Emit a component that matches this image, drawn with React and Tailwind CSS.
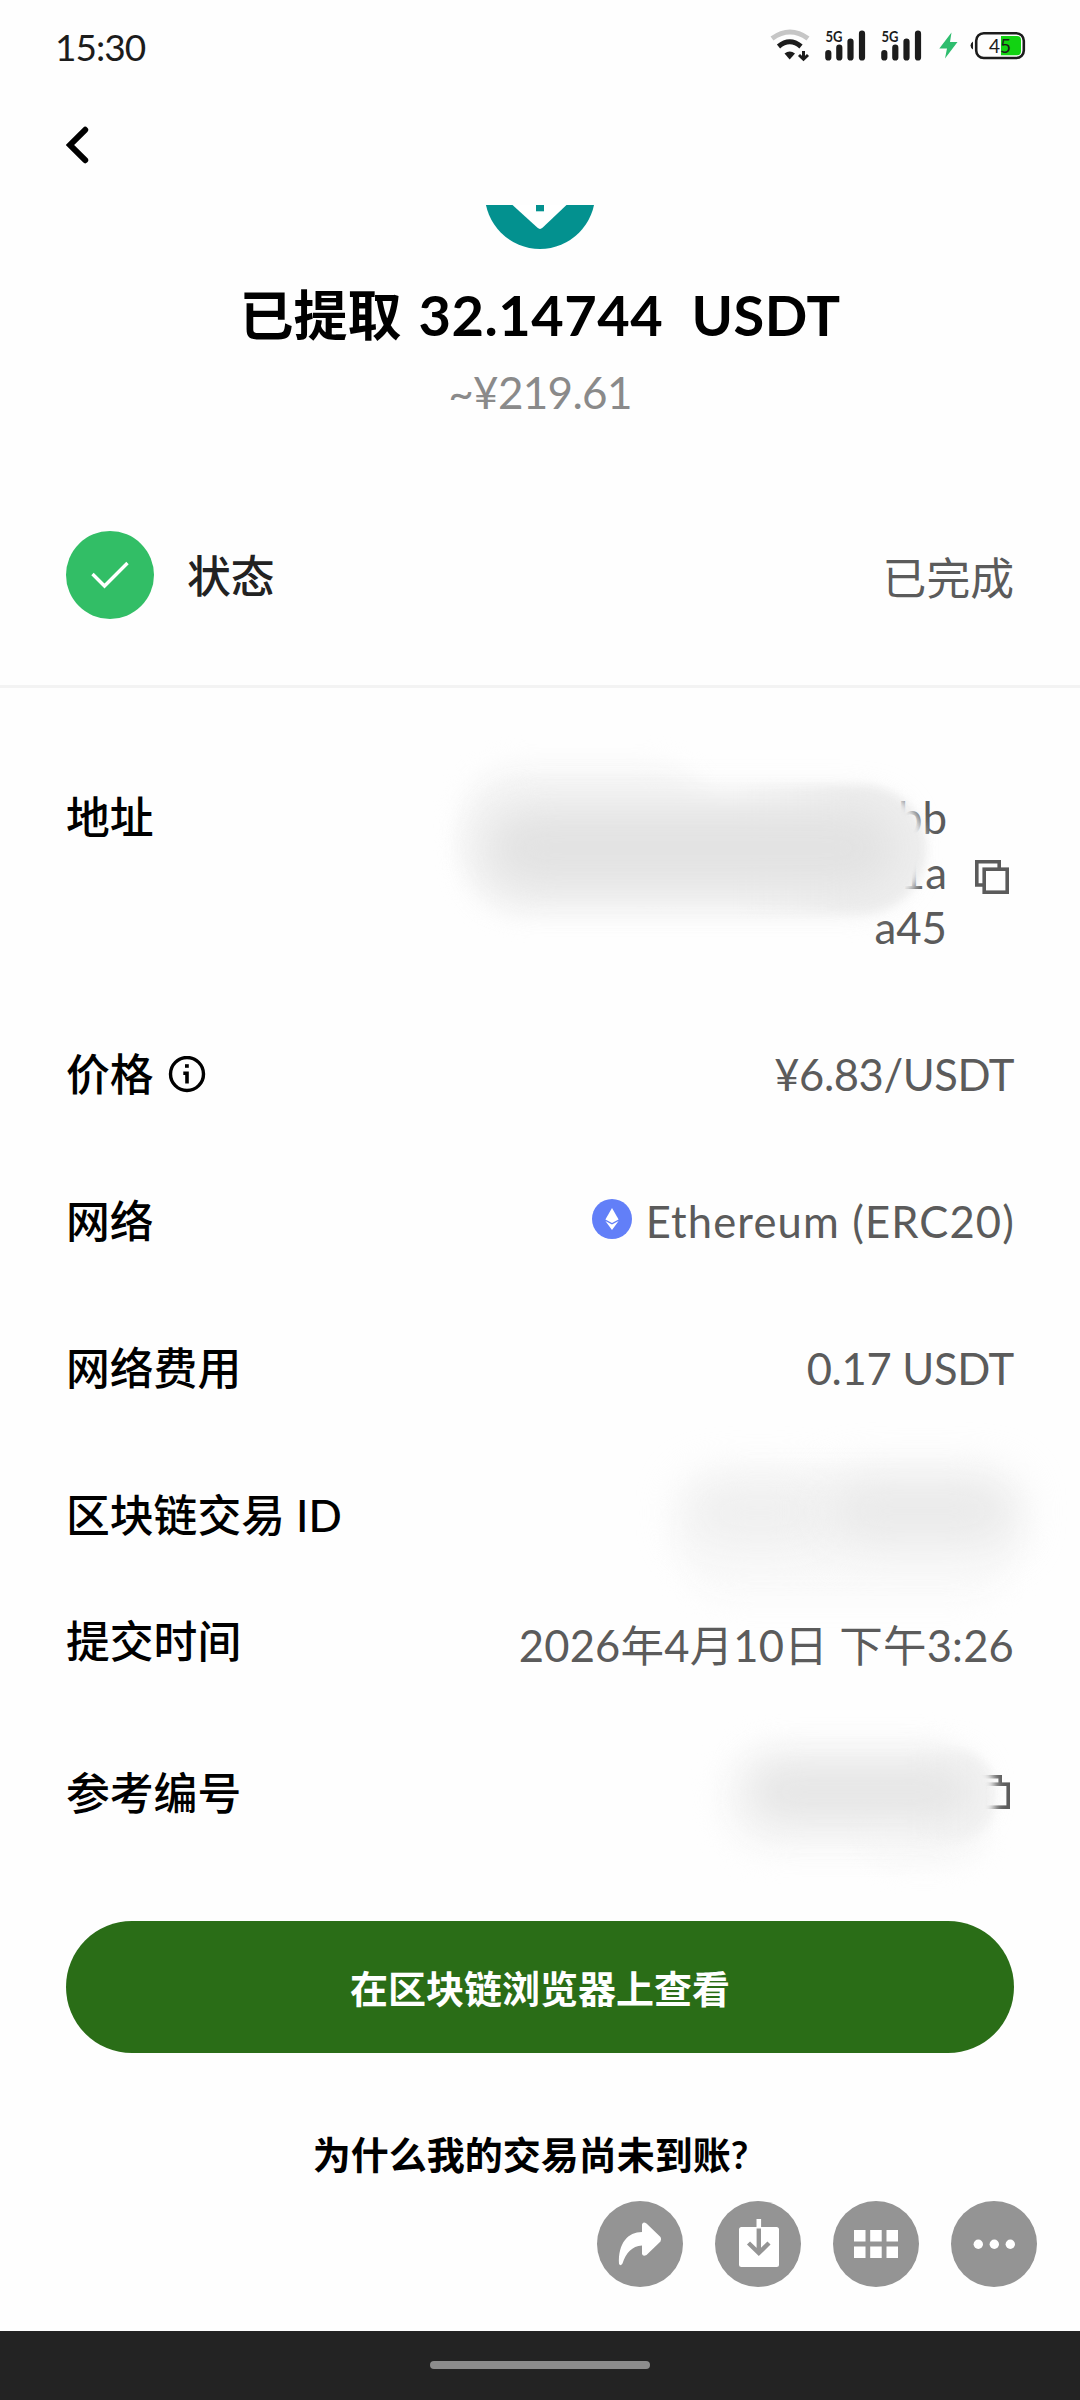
import React from 'react';

const StatusBar = () => (
    <div className="h-[92px] pl-[55px] pr-[54px] flex items-center justify-between text-[#1c1c1c]">
        <span className="text-[37px] leading-none tracking-[-1px]">15:30</span>
        <svg width="258" height="40" viewBox="768 26 258 40" fill="none">
            {/* wifi */}
            <path d="M772 38.5 Q790 25.5 808 38.5" stroke="#c6c6c6" strokeWidth="5" />
            <path d="M778.5 46.5 Q789.7 37 801 46.5" stroke="#1c1c1c" strokeWidth="5" />
            <path d="M784.5 53.5 Q789.7 49.5 795 53.5 L789.7 59.5 Z" fill="#1c1c1c" />
            <path d="M803.5 51 V58 M799 55 L803.5 59.3 L808 55" stroke="#1c1c1c" strokeWidth="3" />
            <Signal x={0} />
            <Signal x={56} />
            {/* charging */}
            <path d="M951.5 32.5 L939.3 48.5 H947 L945 58.5 L957.5 42 H950 Z" fill="#2ebd6e" />
            {/* battery */}
            <path d="M973 41.5 A4.5 4.5 0 0 0 973 49.5 Z" fill="#1c1c1c" />
            <path d="M1001 36 H1017 Q1021 36 1021 40 V51 Q1021 55.3 1017 55.3 H1001 Z" fill="#12d312" />
            <rect x="976.2" y="33.2" width="47.6" height="24.8" rx="7.5" stroke="#1c1c1c" strokeWidth="2.6" />
            <text x="989" y="52.6" fontSize="19" textLength="22" fill="#1c1c1c">45</text>
        </svg>
    </div>
);

const Signal = ({ x }) => (
    <g transform={`translate(${x} 0)`}>
        <text x="825.5" y="41.8" fontSize="15.5" fontWeight="700" textLength="17" lengthAdjust="spacingAndGlyphs" fill="#1c1c1c">5G</text>
        <path d="M828.3 53 V57.5 M839.3 47.7 V57.5 M850.5 41.5 V57.5 M862 33.7 V57.5" stroke="#1c1c1c" strokeWidth="6.2" strokeLinecap="round" />
    </g>
);

const CopyIcon = () => (
    <svg width="34" height="34" viewBox="0 0 34 34" fill="none" stroke="#5b5b5b" strokeWidth="3.6">
        <path d="M8 25 H1.8 V1.8 H24.2 V8" />
        <rect x="9.2" y="9.2" width="23" height="23" />
    </svg>
);

const Row = ({ label, children, className = 'h-[147px]' }) => (
    <div className={`flex items-center justify-between px-[66px] pt-[2px] text-[43.5px] leading-[55px] ${className}`}>
        <div className="flex items-center font-medium text-[43.8px] text-black">{label}</div>
        <div className="flex items-center text-[#5b5b5b]">{children}</div>
    </div>
);

const RoundButton = ({ children }) => (
    <button className="size-[86px] rounded-full bg-[#949494]">
        <svg width="86" height="86" viewBox="0 0 86 86" fill="none">{children}</svg>
    </button>
);

const App = () => {
    return (
        <div className="w-[1080px] h-[2400px] bg-[#fefefe] flex flex-col overflow-hidden font-['Lato','Noto_Sans_CJK_SC',sans-serif]">
            <StatusBar />

            <div className="h-[113px] pl-[66px] pt-[34px]">
                <svg width="24" height="38" viewBox="66 126 24 38" fill="none">
                    <path d="M85.2 129.8 L70 145 L85.2 160.2" stroke="#000" strokeWidth="6" strokeLinecap="round" />
                </svg>
            </div>

            {/* Amount */}
            <div className="h-[278px] flex flex-col items-center">
                <svg width="110" height="44" viewBox="485 205 110 44">
                    <circle cx="540" cy="193.7" r="55.2" fill="#03918f" />
                    <path d="M512.5 205 L537.5 227.8 Q540 230 542.5 227.8 L566.5 205 Z" fill="#fff" />
                    <rect x="536" y="205" width="8" height="6.3" fill="#03918f" />
                </svg>
                <h1 className="mt-[36px] h-[60px] whitespace-pre text-[54px] leading-[60px] font-bold text-black">
                    已提取 <span className="ml-[4px] text-[56px] tracking-[0.5px]">32.14744  USDT</span>
                </h1>
                <p className="mt-[16px] text-[44px] leading-[62px] tracking-[-0.7px] text-[#8a8a8a]">~¥219.61</p>
            </div>

            {/* Status */}
            <div className="h-[205px] pb-[19px] flex items-center px-[66px] border-b-[3px] border-[#f3f3f3] text-[43.8px] leading-[55px]">
                <svg width="88" height="88" viewBox="0 0 88 88" fill="none">
                    <circle cx="44" cy="44" r="44" fill="#32be66" />
                    <path d="M26.5 43 L38.5 55 L61.5 32" stroke="#fff" strokeWidth="3.4" />
                </svg>
                <span className="ml-[33px] pt-[3px] font-medium text-[#222]">状态</span>
                <span className="ml-auto pt-[7px] text-[#5b5b5b]">已完成</span>
            </div>

            {/* Address */}
            <div className="h-[312px] px-[66px] pt-[102px] flex text-[43.8px] leading-[55px]">
                <span className="font-medium text-black">地址</span>
                <div className="relative ml-auto text-right text-[#5b5b5b]">
                    <div>bb</div>
                    <div>1a</div>
                    <div>a45</div>
                    <div className="absolute right-[236px] top-[-24px] w-[250px] h-[120px] rounded-full bg-[#f6f6f6] blur-[13px]"></div>
                    <div className="absolute right-[36px] top-[6px] w-[446px] h-[116px] rounded-[58px] bg-[#f3f3f3] blur-[13px]"></div>
                    <div className="absolute right-[21px] top-[-4px] w-[190px] h-[126px] rounded-r-[63px] bg-linear-to-r from-transparent to-[#eeeeee] to-60% blur-[4px]"></div>
                    <div className="absolute right-[50px] top-[18px] w-[410px] h-[80px] rounded-full bg-[#e2e2e2] blur-[20px]"></div>
                </div>
                <div className="ml-[28px] mr-[5px] pt-[70px]">
                    <CopyIcon />
                </div>
            </div>

            <Row
                label={
                    <>
                        价格
                        <svg className="ml-[14px]" width="38" height="38" viewBox="0 0 38 38" fill="none" stroke="#000">
                            <circle cx="19" cy="18" r="16.5" strokeWidth="3.4" />
                            <path d="M15.3 17.2 H19 V27.6" strokeWidth="3.6" />
                            <path d="M17 10 H20.8" strokeWidth="3.6" />
                        </svg>
                    </>
                }
            >
                <span className="tracking-[-0.4px]">¥6.83/USDT</span>
            </Row>
            <Row label="网络">
                <svg className="mr-[14px] -mt-[5px]" width="40" height="40" viewBox="0 0 40 40">
                    <circle cx="20" cy="20" r="20" fill="#627ff8" />
                    <path d="M20 9 L26.6 20.6 L20 24 L13.4 20.6 Z" fill="#fff" />
                    <path d="M13.4 22 L20 25.6 L26.6 22 L20 31 Z" fill="#fff" />
                </svg>
                <span className="-mr-[1px] tracking-[1.15px]">Ethereum (ERC20)</span>
            </Row>
            <Row label="网络费用">
                <span className="tracking-[-0.3px]">0.17 USDT</span>
            </Row>
            <Row label="区块链交易 ID">
                <div className="relative w-[350px] h-[80px]">
                    <div className="absolute left-[10px] top-[-2px] w-[350px] h-[128px] rounded-[64px] bg-[#fafafa] blur-[12px]"></div>
                    <div className="absolute left-[20px] top-[2px] w-[150px] h-[70px] rounded-full bg-[#efefef] blur-[22px]"></div>
                    <div className="absolute left-[160px] top-[-2px] w-[194px] h-[74px] rounded-full bg-[#eaeaea] blur-[22px]"></div>
                </div>
            </Row>
            <Row label="提交时间" className="h-[105px]">
                <span className="pt-[7px] tracking-[0.2px]">2026年4月10日 下午3:26</span>
            </Row>
            <Row label="参考编号" className="h-[198px]">
                <div className="relative pr-[4px] -mt-[2px]">
                    <CopyIcon />
                    <div className="absolute right-[34px] top-[-30px] w-[260px] h-[108px] rounded-[54px] bg-[#f8f8f8] blur-[14px]"></div>
                    <div className="absolute right-[30px] top-[22px] w-[120px] h-[68px] rounded-full bg-[#f8f8f8] blur-[12px]"></div>
                    <div className="absolute right-[19px] top-[-24px] w-[90px] h-[88px] rounded-r-[40px] bg-linear-to-r from-transparent to-[#f3f3f3] to-70% blur-[4px]"></div>
                    <div className="absolute right-[40px] top-[-14px] w-[225px] h-[62px] rounded-full bg-[#e6e6e6] blur-[18px]"></div>
                </div>
            </Row>

            <button className="mt-[30px] mx-[66px] h-[132px] pt-[2px] shrink-0 rounded-full bg-[#2a6d17] text-[38px] font-bold text-white">
                在区块链浏览器上查看
            </button>
            <a className="mt-[71px] pr-[19px] text-center text-[38px] leading-[60px] font-bold text-black">为什么我的交易尚未到账?</a>

            {/* Floating actions */}
            <div className="mt-[17px] mr-[43px] flex justify-end gap-8">
                <RoundButton>
                    <path d="M22 63 C21 42 31 31 45 31 V23.5 Q46 20 49.5 22.5 L63.5 36 Q65 38.5 63.5 40.5 L49.5 54 Q46 56 45 53 V44.5 C35 45 29 52 25.5 62.5 Q23.5 65.5 22 63 Z" fill="#fff" />
                </RoundButton>
                <RoundButton>
                    <rect x="24" y="26" width="40" height="40" rx="2.5" fill="#fff" />
                    <path d="M43.8 18 V27" stroke="#fff" strokeWidth="4.6" />
                    <path d="M43.8 27.5 V51 M33.5 42 L43.8 52 L54 42" stroke="#949494" strokeWidth="4.4" />
                </RoundButton>
                <RoundButton>
                    <path d="M21 29 h11.5 v11.5 h-11.5 Z M37.2 29 h11.5 v11.5 h-11.5 Z M53.5 29 h11.5 v11.5 h-11.5 Z M21 45.5 h11.5 v11.5 h-11.5 Z M37.2 45.5 h11.5 v11.5 h-11.5 Z M53.5 45.5 h11.5 v11.5 h-11.5 Z" fill="#fff" />
                </RoundButton>
                <RoundButton>
                    <circle cx="27.3" cy="43.3" r="4.7" fill="#fff" />
                    <circle cx="43.3" cy="43.3" r="4.7" fill="#fff" />
                    <circle cx="59.3" cy="43.3" r="4.7" fill="#fff" />
                </RoundButton>
            </div>

            <div className="mt-auto h-[69px] shrink-0 bg-[#232323] flex justify-center pt-[30px]">
                <div className="w-[220px] h-[8px] rounded-full bg-[#8c8c8c]"></div>
            </div>
        </div>
    );
};

export default App;
